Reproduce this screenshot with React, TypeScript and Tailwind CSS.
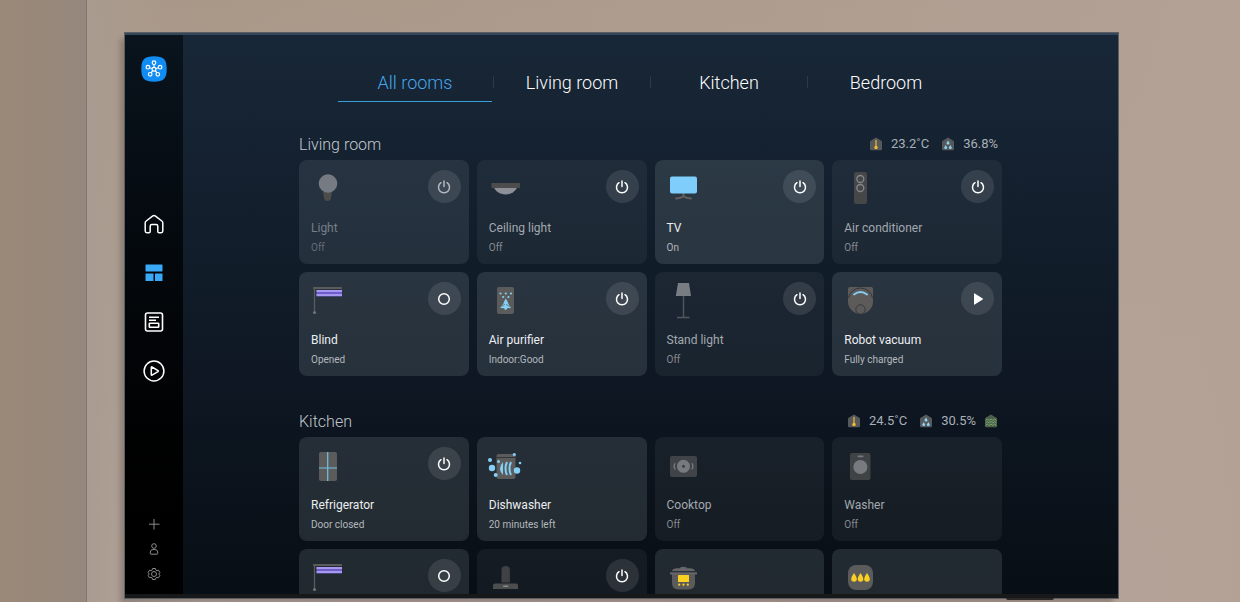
import { useState } from "react";
import type { ReactNode } from "react";

type Tone = "on" | "off" | "dim";
type Control = "power" | "circle" | "play";

interface Device {
  id: string;
  name: string;
  status: string;
  icon: ReactNode;
  tone: Tone;
  control?: Control;
}

const GREY = "#5b5b5c";

const bulb = (
  <>
    <path d="M12 24h9l-1 6q-.5 3-3.500 3t-3.500-3z" fill="#4d4c4b" />
    <circle cx="17" cy="15.500" r="9.300" fill="#767b83" />
  </>
);

const ceilingLight = (
  <>
    <path d="M5 20h23q-4 6.500-11.500 6.500T5 20z" fill="#8d9096" />
    <rect x="2.500" y="15" width="28.500" height="5" rx=".5" fill="#4d4c4c" />
  </>
);

const tv = (
  <>
    <path d="M16.500 25v3M9 30.500q6-.5 7.500-2.500 1.500 2 7.500 2.500" fill="none" stroke="#685f60" strokeWidth="1.800" strokeLinecap="round" />
    <rect x="3" y="8.500" width="27" height="17" rx="2" fill="#7fcdfb" />
  </>
);

const airConditioner = (
  <>
    <rect x="10" y="4" width="13" height="32" rx="2" fill="#464748" />
    <circle cx="16.300" cy="11" r="3.500" fill="none" stroke="#85878b" strokeWidth="1.300" />
    <circle cx="16.300" cy="20" r="3.500" fill="none" stroke="#85878b" strokeWidth="1.300" />
  </>
);

const blind = (
  <>
    <rect x="2" y="7" width="29" height="2" rx=".5" fill={GREY} />
    <path d="M3.500 8v24" stroke={GREY} strokeWidth="1.300" />
    <circle cx="3.500" cy="32.500" r="1.600" fill="#727272" />
    <rect x="5.500" y="10" width="25.500" height="6.500" fill="#6d5dc4" />
    <path d="M5.500 11h25.500M5.500 15h25.500" stroke="#b9abff" strokeWidth="1.400" />
  </>
);

const airPurifier = (
  <>
    <rect x="8" y="7" width="17" height="27" rx="2" fill={GREY} />
    <g fill="#84d0f5">
      <circle cx="11.500" cy="13.500" r="1.100" />
      <circle cx="16.800" cy="13.500" r="1.100" />
      <circle cx="22" cy="13.500" r="1.100" />
      <circle cx="14.200" cy="17" r="1.100" />
      <circle cx="19.400" cy="17" r="1.100" />
      <path d="M16.800 18.500q2 3 2.700 5.500l2.500 4-4 .3-.4 1.400h-1.900l-.5-1.400-4-.3 3-4q.6-2.500 2.600-5.500z" />
    </g>
    <path d="M13 26.500l3-2.500M21 26.500l-4-2" stroke={GREY} strokeWidth=".7" />
  </>
);

const standLight = (
  <>
    <path d="M16.500 16v21.500" stroke="#51565c" strokeWidth="1.400" />
    <path d="M10 37.500h12.500" stroke="#51565c" strokeWidth="1.600" />
    <path d="M11 3h11l2 13H8.800z" fill="#787d83" />
  </>
);

const robotVacuum = (
  <>
    <path d="M6 7h21q2 0 2 2v12.500a12.500 12.500 0 0 1-25 0V9q0-2 2-2z" fill="#5d5b59" />
    <path d="M4.500 18a12.200 12.200 0 0 1 24 0" fill="none" stroke="#33363b" strokeWidth="1" />
    <path d="M10 14.500q6.500-5 13 0" fill="none" stroke="#83cff5" strokeWidth="1.900" strokeLinecap="round" />
    <circle cx="16.500" cy="29.500" r="4.700" fill="none" stroke="#33363b" strokeWidth="1" />
  </>
);

const refrigerator = (
  <>
    <rect x="8" y="7" width="18" height="29" rx="2" fill={GREY} />
    <path d="M16.700 7v29M8 23h18" stroke="#74bfe6" strokeWidth="1.200" />
  </>
);

const dishwasher = (
  <>
    <rect x="7.500" y="9" width="19" height="25" rx="2" fill={GREY} />
    <path d="M7.500 12.500h19" stroke="#30353a" strokeWidth="1" />
    <g fill="#83cff5">
      <circle cx="1" cy="15" r="2" />
      <circle cx="3" cy="23" r="3.200" />
      <circle cx="6.700" cy="30" r="2" />
      <circle cx="9.500" cy="16.500" r="1.500" />
      <circle cx="25.300" cy="9.500" r="1.600" />
      <circle cx="31" cy="18" r="1.300" />
      <circle cx="28" cy="25.500" r="3.200" />
      <path d="M14 17q-6 6.500 0 13z" />
    </g>
    <path d="M18 17q-3 6.500 0 13M22 17q-3 6.500 0 13" fill="none" stroke="#83cff5" strokeWidth="2" />
  </>
);

const cooktop = (
  <>
    <rect x="3" y="11" width="27" height="21" rx="2" fill="#404448" />
    <circle cx="16.500" cy="21.300" r="6.500" fill="#777b7f" />
    <circle cx="16.500" cy="21.300" r="1.500" fill="#3b4045" />
    <path d="M8.500 18.500h-.5q-2 2.800 0 5.600h.5M24.500 18.500h.5q2 2.800 0 5.600h-.5" fill="none" stroke="#777b7f" strokeWidth="1.200" />
  </>
);

const washer = (
  <>
    <rect x="6" y="8" width="20.500" height="27" rx="2" fill="#404346" />
    <rect x="13.500" y="10.500" width="6" height="1.800" rx=".8" fill="#777b7f" />
    <circle cx="16.400" cy="22" r="7" fill="#777b7f" />
  </>
);

const stickVacuum = (
  <>
    <path d="M12.500 25.500V13q0-4 4.200-4t4.200 4v12.500z" fill="#404144" />
    <path d="M6 26.500h21q2 0 2 2V32H4v-3.500q0-2 2-2z" fill="#4c4d4f" />
    <rect x="14" y="28.500" width="5.500" height="1.500" rx=".7" fill="#8b8c8e" />
  </>
);

const pot = (
  <>
    <path d="M5 17h23v9q0 6.500-6.500 6.500h-10Q5 32.500 5 26z" fill={GREY} />
    <path d="M3 15.200h27v2.300H3zM5 14q1-2.500 5-2.700h3q0-1.500 3.500-1.500t3.500 1.500h3q4 .2 5 2.700z" fill="#666668" />
    <path d="M4.500 14.700h24" stroke="#34383c" strokeWidth=".7" />
    <rect x="11" y="18" width="11" height="7" rx=".5" fill="#fbd023" />
    <circle cx="12.200" cy="27.700" r="1.100" fill="#fbd023" />
    <circle cx="16.500" cy="27.700" r="1.100" fill="#fbd023" />
    <circle cx="20.800" cy="27.700" r="1.100" fill="#fbd023" />
  </>
);

const humidifier = (
  <>
    <rect x="4" y="8" width="25" height="25" rx="8" fill={GREY} />
    <g fill="#fbd023">
      <path d="M10 16q2.800 4 2.800 6a2.800 2.800 0 0 1-5.600 0q0-2 2.800-6z" />
      <path d="M16.500 16q2.800 4 2.800 6a2.800 2.800 0 0 1-5.600 0q0-2 2.800-6z" />
      <path d="M23 16q2.800 4 2.800 6a2.800 2.800 0 0 1-5.600 0q0-2 2.800-6z" />
    </g>
  </>
);

const livingRoom: Device[] = [
  { id: "light", name: "Light", status: "Off", icon: bulb, tone: "dim", control: "power" },
  { id: "ceiling", name: "Ceiling light", status: "Off", icon: ceilingLight, tone: "off", control: "power" },
  { id: "tv", name: "TV", status: "On", icon: tv, tone: "on", control: "power" },
  { id: "ac", name: "Air conditioner", status: "Off", icon: airConditioner, tone: "off", control: "power" },
  { id: "blind", name: "Blind", status: "Opened", icon: blind, tone: "on", control: "circle" },
  { id: "purifier", name: "Air purifier", status: "Indoor:Good", icon: airPurifier, tone: "on", control: "power" },
  { id: "stand", name: "Stand light", status: "Off", icon: standLight, tone: "off", control: "power" },
  { id: "robot", name: "Robot vacuum", status: "Fully charged", icon: robotVacuum, tone: "on", control: "play" },
];

const kitchen: Device[] = [
  { id: "fridge", name: "Refrigerator", status: "Door closed", icon: refrigerator, tone: "on", control: "power" },
  { id: "dishwasher", name: "Dishwasher", status: "20 minutes left", icon: dishwasher, tone: "on" },
  { id: "cooktop", name: "Cooktop", status: "Off", icon: cooktop, tone: "off" },
  { id: "washer", name: "Washer", status: "Off", icon: washer, tone: "off" },
  { id: "kitchen-blind", name: "", status: "", icon: blind, tone: "on", control: "circle" },
  { id: "stick", name: "", status: "", icon: stickVacuum, tone: "off", control: "power" },
  { id: "pot", name: "", status: "", icon: pot, tone: "on" },
  { id: "humidifier", name: "", status: "", icon: humidifier, tone: "on" },
];

const cardTone: Record<Tone, string> = {
  on: "bg-[#a8b8ba]/16",
  off: "bg-[#a4b4b8]/8",
  dim: "bg-[#a4b4b8]/13",
};

const nameTone: Record<Tone, string> = {
  on: "text-[#eceef0]",
  off: "text-[#a3a8ae]",
  dim: "text-[#777e88]",
};

const statusTone: Record<Tone, string> = {
  on: "text-[#b4b8bd]",
  off: "text-[#868b92]",
  dim: "text-[#656c77]",
};

function ControlIcon({ kind }: { kind: Control }) {
  return (
    <svg className="size-4" viewBox="0 0 16 16" fill="none" stroke="currentColor" strokeWidth="1.500" strokeLinecap="round">
      {kind === "power" && <path d="M8 2v5.500M5 3.700a5.500 5.500 0 1 0 6 0" />}
      {kind === "circle" && <circle cx="8" cy="8" r="5.300" />}
      {kind === "play" && <path d="M4 2.800v10.400q0 .8.700.400l8-5q.8-.6 0-1.200l-8-5q-.7-.4-.7.400z" fill="currentColor" stroke="none" />}
    </svg>
  );
}

function DeviceCard({ device }: { device: Device }) {
  return (
    <article className={`min-h-[104px] rounded-lg pt-2 pr-2 pb-2 pl-3 ${cardTone[device.tone]}`}>
      <div className="flex items-start justify-between">
        <svg className="size-10 overflow-visible" viewBox="0 0 40 40" aria-hidden="true">
          {device.icon}
        </svg>
        {device.control && (
          <button
            type="button"
            aria-label={device.name || device.id}
            className={`mt-0.5 flex size-[33px] items-center justify-center rounded-full bg-white/10 ${
              device.tone === "dim" ? "text-[#b5b9bf]" : "text-white"
            }`}
          >
            <ControlIcon kind={device.control} />
          </button>
        )}
      </div>
      {device.name && (
        <>
          <h3 className={`mt-3 text-xs leading-4 ${nameTone[device.tone]}`}>{device.name}</h3>
          <p className={`mt-1 text-[10px] leading-4 ${statusTone[device.tone]}`}>{device.status}</p>
        </>
      )}
    </article>
  );
}

function HouseIcon({ kind }: { kind: "temp" | "humidity" | "air" }) {
  return (
    <svg className="size-[14px]" viewBox="0 0 13 14" aria-hidden="true">
      <path d="M6.500.5l5.300 3.300q.7.500.7 1.300V12q0 1.300-1.300 1.300H1.800Q.5 13.300.5 12V5.100q0-.8.7-1.300z" fill={kind === "air" ? "#4c5f4b" : "#56595c"} />
      {kind === "temp" && (
        <>
          <path d="M6.500 3.500v6" stroke="#e8b32c" strokeWidth="1.300" strokeLinecap="round" />
          <circle cx="6.500" cy="10.500" r="1.700" fill="#f4bd2b" />
        </>
      )}
      {kind === "humidity" && (
        <g fill="#8ed4f2">
          <path d="M6.500 3.500L8 6q.3 1.500-1.500 1.500T5 6z" />
          <path d="M4.200 7.900l1.400 2.500q.2 1.500-1.400 1.500t-1.400-1.500z" />
          <path d="M8.800 7.900l1.400 2.500q.2 1.500-1.400 1.500t-1.400-1.500z" />
        </g>
      )}
      {kind === "air" && (
        <path d="M1 6.500L2.800 5l1.900 1.500L6.500 5l1.900 1.500L10.200 5 12 6.500M1 9l1.800-1.500L4.700 9l1.800-1.500L8.400 9l1.800-1.500L12 9M1 11.500L2.800 10l1.900 1.500L6.500 10l1.900 1.500 1.800-1.500 1.800 1.500" fill="none" stroke="#83b873" strokeWidth=".8" />
      )}
    </svg>
  );
}

interface RoomProps {
  title: string;
  temp: string;
  humidity: string;
  air?: boolean;
  devices: Device[];
}

function Room({ title, temp, humidity, air, devices }: RoomProps) {
  return (
    <section>
      <div className="flex h-8 items-center justify-between">
        <h2 className="pt-0.5 text-base font-light text-[#c3c8ce]">{title}</h2>
        <div className="flex items-center gap-2 pr-1 text-[13px] text-[#a9afb7]">
          <HouseIcon kind="temp" />
          <span className="mr-1">{temp}</span>
          <HouseIcon kind="humidity" />
          <span>{humidity}</span>
          {air && <HouseIcon kind="air" />}
        </div>
      </div>
      <div className="grid grid-cols-4 gap-2">
        {devices.map((device) => (
          <DeviceCard key={device.id} device={device} />
        ))}
      </div>
    </section>
  );
}

function Sidebar() {
  const linkClass = "flex size-6 items-center justify-center";

  return (
    <aside className="flex w-[58px] shrink-0 flex-col items-center bg-linear-to-b from-[#0a141d] via-[#020406] via-60% to-black pt-[21px] pb-3">
      <a href="#home" aria-label="SmartThings">
        <svg className="size-[26px]" viewBox="0 0 26 26">
          <path d="M13 .3c9.500 0 12.700 3.200 12.700 12.700S22.500 25.700 13 25.700.3 22.500.3 13 3.500.3 13 .3z" fill="#118cf3" />
          <g fill="none" stroke="#fff" strokeWidth="1.200">
            <path d="M13 8.500v2.700M8.700 11.700l2.300.8M17.300 11.700l-2.300.8M10.300 16.700l1.500-2M15.700 16.700l-1.500-2" />
            <circle cx="13" cy="13.300" r="1.900" />
            <circle cx="13" cy="6.700" r="1.800" />
            <circle cx="6.900" cy="11.200" r="1.800" />
            <circle cx="19.100" cy="11.200" r="1.800" />
            <circle cx="9.200" cy="18.300" r="1.800" />
            <circle cx="16.800" cy="18.300" r="1.800" />
          </g>
        </svg>
      </a>
      <nav className="mt-[130px] flex flex-col gap-[25px] text-white">
        <a href="#house" aria-label="Home" className={linkClass}>
          <svg className="size-6" viewBox="0 0 24 24" fill="none" stroke="currentColor" strokeWidth="1.500" strokeLinejoin="round">
            <path d="M3.200 11q0-1.300 1-2l6.600-5.100q1.200-.9 2.400 0L19.800 9q1 .7 1 2v8q0 1.700-1.700 1.700h-2q-1.300 0-1.300-1.300v-5.200q0-1.700-1.700-1.700h-4.200q-1.700 0-1.700 1.700v5.200q0 1.300-1.300 1.300h-2Q3.200 20.700 3.200 19z" />
          </svg>
        </a>
        <a href="#devices" aria-label="Devices" className={`${linkClass} text-[#38a8f7]`}>
          <svg className="size-6" viewBox="0 0 24 24" fill="currentColor">
            <rect x="3.500" y="3.500" width="17" height="7" rx=".6" />
            <rect x="3.500" y="12.500" width="8" height="7.500" rx=".6" />
            <rect x="13" y="12.500" width="7.500" height="7.500" rx=".6" />
          </svg>
        </a>
        <a href="#life" aria-label="Life" className={linkClass}>
          <svg className="size-6" viewBox="0 0 24 24" fill="none" stroke="currentColor" strokeWidth="1.600">
            <rect x="3.500" y="3" width="17" height="18" rx="2" />
            <path d="M7 7.200h10M7 10.200h7" />
            <rect x="7.300" y="13.300" width="9.400" height="3.900" rx=".5" />
          </svg>
        </a>
        <a href="#routines" aria-label="Routines" className={linkClass}>
          <svg className="size-6 overflow-visible" viewBox="0 0 24 24" fill="none" stroke="currentColor" strokeWidth="1.500" strokeLinejoin="round">
            <circle cx="12" cy="12" r="9.900" />
            <path d="M9.300 8.300v7.400q0 .8.700.4l6-3.500q.8-.5 0-1L10 8q-.7-.5-.7.300z" />
          </svg>
        </a>
      </nav>
      <div className="mt-auto flex flex-col gap-[9px] text-[#8b8b8b]">
        <button type="button" aria-label="Add" className="size-4">
          <svg className="size-4" viewBox="0 0 16 16" stroke="currentColor" strokeWidth="1">
            <path d="M8 3v10.500M3 8.200h10.500" />
          </svg>
        </button>
        <button type="button" aria-label="Account" className="size-4">
          <svg className="size-4" viewBox="0 0 16 16" fill="none" stroke="currentColor" strokeWidth="1">
            <circle cx="8" cy="5" r="2.300" />
            <path d="M4.300 12.500V11q0-2.600 3.700-2.600t3.700 2.600v1.500q0 .7-.7.700H5q-.7 0-.7-.7z" />
          </svg>
        </button>
        <button type="button" aria-label="Settings" className="size-4">
          <svg className="size-4" viewBox="0 0 16 16" fill="none" stroke="currentColor" strokeWidth="1" strokeLinejoin="round">
            <path d="M6.600 2.500h2.800l.5 1.600 1 .6 1.700-.4 1.300 2.400L12.700 8l1.200 1.300-1.300 2.400-1.700-.4-1 .6-.5 1.600H6.600l-.5-1.600-1-.6-1.700.4-1.300-2.400L3.300 8 2.100 6.700l1.300-2.400 1.700.4 1-.6z" />
            <circle cx="8" cy="8" r="2.500" />
          </svg>
        </button>
      </div>
    </aside>
  );
}

const tabs = ["All rooms", "Living room", "Kitchen", "Bedroom"];

export default function App() {
  const [active, setActive] = useState("All rooms");

  return (
    <div className="flex h-screen overflow-hidden bg-linear-to-b from-[#a99787] to-[#b9aba2] font-['Roboto',sans-serif]">
      <div className="w-[87px] shrink-0 border-r border-[#83776e] bg-linear-to-r from-[#9b8978] to-[#95877d]" />
      <div className="min-w-0 flex-1 bg-linear-to-r from-[#a99b8f] via-[#a99b8f]/0 via-10% to-[#b3a196] pt-[33px] pr-[122px] pb-1 pl-[38px]">
        <div className="relative flex h-full border-t-2 border-b-4 border-t-[#33465a] border-b-[#17181a] shadow-[0_0_0_1px_#5b5f63,-5px_6px_5px_rgba(70,60,55,0.3)]">
          <Sidebar />
          <main className="min-w-0 flex-1 overflow-hidden bg-linear-to-b from-[#182737] via-[#101a27] via-50% to-[#080e15] pt-[29px]">
            <div role="tablist" className="flex items-start justify-center">
              {tabs.map((tab, i) => (
                <div key={tab} className="flex items-start">
                  {i > 0 && <span className="mx-px mt-3 h-3 w-px bg-[#2c3a48]" />}
                  <button
                    type="button"
                    role="tab"
                    aria-selected={tab === active}
                    onClick={() => setActive(tab)}
                    className={`h-[38px] w-[154px] border-b text-lg font-light ${
                      tab === active ? "border-[#399fd8] text-[#46a6ee]" : "border-transparent text-white"
                    }`}
                  >
                    {tab}
                  </button>
                </div>
              ))}
            </div>
            <div className="mx-auto mt-[26px] flex max-w-[703px] flex-col gap-[29px]">
              <Room title="Living room" temp="23.2˚C" humidity="36.8%" devices={livingRoom} />
              <Room title="Kitchen" temp="24.5˚C" humidity="30.5%" air devices={kitchen} />
            </div>
          </main>
          {/* sensor under the bezel */}
          <span className="absolute right-16 -bottom-1.5 h-0.5 w-12 rounded-b bg-[#2a2726]" />
        </div>
      </div>
    </div>
  );
}
